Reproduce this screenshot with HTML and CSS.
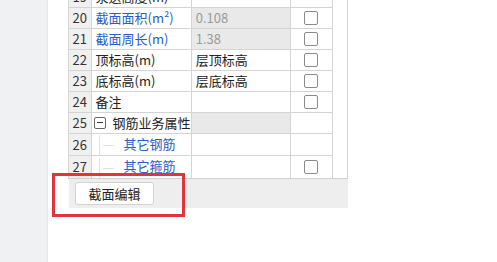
FILE: index.html
```html
<!DOCTYPE html>
<html>
<head>
  <title>属性编辑</title>
  <link rel="stylesheet" href="styles.css">
</head>
<body>
  <div class="side"></div>
  <div class="main">
    <div class="panel">
      <div class="grid-box">
        <table class="props">
          <colgroup>
            <col class="c-num"><col class="c-name"><col class="c-val"><col class="c-chk">
          </colgroup>
          <tr><td class="num">19</td><td>泵送高度(m)</td><td></td><td></td></tr>
          <tr><td class="num">20</td><td class="blue">截面面积(m²)</td><td class="ro">0.108</td><td><span class="chk"></span></td></tr>
          <tr><td class="num">21</td><td class="blue">截面周长(m)</td><td class="ro">1.38</td><td><span class="chk"></span></td></tr>
          <tr><td class="num">22</td><td>顶标高(m)</td><td>层顶标高</td><td><span class="chk"></span></td></tr>
          <tr><td class="num">23</td><td>底标高(m)</td><td>层底标高</td><td><span class="chk"></span></td></tr>
          <tr><td class="num">24</td><td>备注</td><td></td><td><span class="chk"></span></td></tr>
          <tr><td class="num">25</td><td class="group"><span class="minus"></span>钢筋业务属性</td><td class="ro"></td><td></td></tr>
          <tr><td class="num">26</td><td class="leaf blue"><span class="branch"></span>其它钢筋</td><td></td><td></td></tr>
          <tr class="last"><td class="num">27</td><td class="leaf blue"><span class="branch"></span>其它箍筋</td><td></td><td><span class="chk"></span></td></tr>
        </table>
      </div>
      <div class="footer">
        <button class="btn">截面编辑</button>
      </div>
      <div class="mark"></div>
    </div>
  </div>
</body>
</html>
```

FILE: styles.css
```css
/* page */
body {
  margin: 0;
  height: 262px;
  display: flex;
  overflow: hidden;
  font-family: "Noto Sans CJK SC", "Microsoft YaHei", sans-serif;
  font-size: 13px;
  color: #222;
  background: #fff;
}

.side {
  width: 47px;
  background: #f0f1f3;
  border-right: 1px solid #e6e7ea;
}

.main {
  flex: 1;
  padding-left: 20px;
}

/* property panel */
.panel {
  position: relative;
  width: 280px;
  margin-top: -13px;
}

.grid-box {
  border-left: 1px solid #d4d4d4;
  border-right: 1px solid #d4d4d4;
  border-bottom: 1px solid #cfcfcf;
}

.props {
  border-collapse: collapse;
  table-layout: fixed;
  width: 264px;
}

.c-num { width: 22px; }
.c-name { width: 100px; }
.c-val { width: 99px; }
.c-chk { width: 42px; }

.props td {
  height: 20px;
  padding: 0 0 0 4px;
  border: 1px solid #d4d4d4;
  white-space: nowrap;
  overflow: hidden;
  line-height: 20px;
}

.props tr:first-child td { border-top: none; }
.props td:first-child { border-left: none; }
.props tr.last td { border-bottom: none; height: 19px; }

.props td.num {
  padding: 0;
  text-align: center;
  background: #f0f0f0;
  color: #333;
}

.props td.ro {
  background: #e9e9e9;
  color: #9a9a9a;
}

.blue { color: #2a5cc8; }

.chk {
  display: block;
  width: 12px;
  height: 12px;
  margin-left: 9px;
  border: 1px solid #8a8a8a;
  border-radius: 2px;
}

/* tree */
.group .minus {
  display: inline-block;
  vertical-align: middle;
  width: 10px;
  height: 10px;
  margin: -2px 7px 0 -2px;
  border: 1px solid #666;
  border-radius: 2px;
  position: relative;
}

.group .minus::after {
  content: "";
  position: absolute;
  left: 2px;
  top: 4px;
  width: 6px;
  height: 1px;
  background: #333;
}

.props td.leaf {
  padding-left: 7px;
}

.branch {
  display: inline-block;
  vertical-align: middle;
  width: 14px;
  height: 20px;
  margin-right: 10px;
  border-left: 1px solid #e2e2e2;
  background: linear-gradient(#e0e0e0, #e0e0e0) no-repeat 3px 10px / 11px 1px;
}

/* footer */
.footer {
  height: 29px;
  padding: 3px 0 0 6px;
  box-sizing: border-box;
  background: #eeeeee;
  margin-left: 1px;
}

.btn {
  width: 79px;
  height: 23px;
  padding: 0;
  background: #fff;
  border: 1px solid #d2d2d2;
  border-radius: 3px;
  font-family: inherit;
  font-size: 13px;
  color: #222;
}

/* highlight box */
.mark {
  position: absolute;
  left: -16px;
  top: 186px;
  width: 127px;
  height: 38px;
  border: 3px solid #e2353b;
}
```
